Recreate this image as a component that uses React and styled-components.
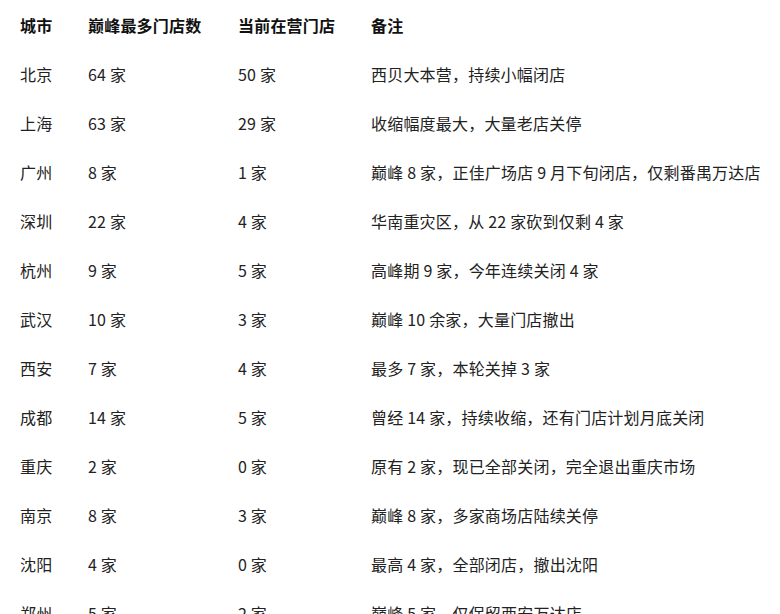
import React from "react";
import styled, { createGlobalStyle } from "styled-components";

const GlobalStyle = createGlobalStyle`
  html, body {
    margin: 0;
    padding: 0;
    background: #fff;
  }
  body {
    font-family: "Noto Sans CJK SC", "Noto Sans", sans-serif;
    color: #1c1c1c;
  }
`;

const rows = [
  ["北京", "64 家", "50 家", "西贝大本营，持续小幅闭店"],
  ["上海", "63 家", "29 家", "收缩幅度最大，大量老店关停"],
  ["广州", "8 家", "1 家", "巅峰 8 家，正佳广场店 9 月下旬闭店，仅剩番禺万达店"],
  ["深圳", "22 家", "4 家", "华南重灾区，从 22 家砍到仅剩 4 家"],
  ["杭州", "9 家", "5 家", "高峰期 9 家，今年连续关闭 4 家"],
  ["武汉", "10 家", "3 家", "巅峰 10 余家，大量门店撤出"],
  ["西安", "7 家", "4 家", "最多 7 家，本轮关掉 3 家"],
  ["成都", "14 家", "5 家", "曾经 14 家，持续收缩，还有门店计划月底关闭"],
  ["重庆", "2 家", "0 家", "原有 2 家，现已全部关闭，完全退出重庆市场"],
  ["南京", "8 家", "3 家", "巅峰 8 家，多家商场店陆续关停"],
  ["沈阳", "4 家", "0 家", "最高 4 家，全部闭店，撤出沈阳"],
  ["郑州", "5 家", "2 家", "巅峰 5 家，仅保留西安万达店"],
];

const Page = styled.div`
  width: 780px;
  height: 614px;
  overflow: hidden;
  background: #fff;
`;

const Table = styled.div`
  display: grid;
  grid-template-columns: 68px 150px 133px 1fr;
  padding-left: 20px;
`;

const Cell = styled.div`
  height: 49px;
  display: flex;
  align-items: center;
  font-size: 16px;
  font-weight: ${(p) => (p.$head ? 700 : 400)};
  color: ${(p) => (p.$head ? "#111" : "#222")};
  white-space: nowrap;
  letter-spacing: 0.2px;
`;

export default function App() {
  return (
    <>
      <GlobalStyle />
      <Page>
        <Table>
          {["城市", "巅峰最多门店数", "当前在营门店", "备注"].map((h) => (
            <Cell $head key={h}>
              {h}
            </Cell>
          ))}
          {rows.map((r) =>
            r.map((c, i) => <Cell key={r[0] + i}>{c}</Cell>)
          )}
        </Table>
      </Page>
    </>
  );
}
